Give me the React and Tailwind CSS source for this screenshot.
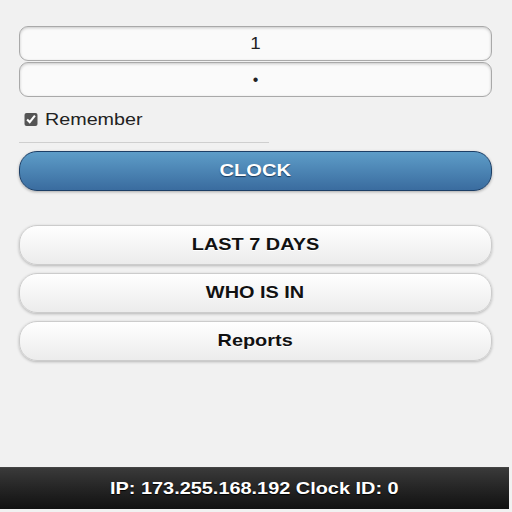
export default function App() {
  const font = { fontFamily: '"Liberation Sans", Arial, sans-serif' }
  return (
    <div style={font} className="w-[512px] h-[512px] bg-[#f1f1f1] flex flex-col">
      <div className="flex-1 px-[19px] pt-[26px] pr-[20px]">
        {/* login fields */}
        <div className="flex flex-col gap-px">
          <div className="h-[35px] rounded-[9px] border border-[#a9a9a9] bg-[#fafafa] shadow-[inset_0_1px_3px_rgba(0,0,0,0.2)] flex items-center justify-center text-[16px] text-[#222]">
            <span className="inline-block scale-x-[1.17]">1</span>
          </div>
          <div className="h-[35px] rounded-[9px] border border-[#a9a9a9] bg-[#fafafa] shadow-[inset_0_1px_3px_rgba(0,0,0,0.2)] flex items-center justify-center text-[16px] text-[#222]">
            •
          </div>
        </div>

        <label className="flex items-center gap-[7px] mt-[14px] ml-[5px] text-[17px] text-[#222] leading-none">
          <input type="checkbox" defaultChecked className="w-[14px] h-[13px] m-0 accent-[#555]" />
          <span className="inline-block origin-left scale-x-[1.16]">Remember</span>
        </label>

        <div className="mt-[14px] w-[250px] h-px bg-[#cfcfcf]" />

        <button className="mt-[8px] w-full h-[40px] rounded-[18px] border border-[#1d3f66] bg-gradient-to-b from-[#5e9dc8] to-[#3a6c9f] text-white text-[17px] font-bold [text-shadow:0_1px_1px_#1a3a5c] shadow-[0_1px_3px_rgba(0,0,0,0.3)]">
          <span className="inline-block scale-x-[1.18]">CLOCK</span>
        </button>

        <div className="mt-[34px] flex flex-col gap-[8px]">
          {['LAST 7 DAYS', 'WHO IS IN', 'Reports'].map((t) => (
            <button
              key={t}
              className="w-full h-[40px] rounded-[18px] border border-[#cccccc] bg-gradient-to-b from-white to-[#ececec] text-[#111] text-[17px] font-bold shadow-[0_1px_3px_rgba(0,0,0,0.25)] [text-shadow:0_1px_0_#fff]"
            >
              <span className="inline-block scale-x-[1.17]">{t}</span>
            </button>
          ))}
        </div>
      </div>

      <div className="h-[42px] mb-[3px] mr-[3px] border-t border-[#444] bg-gradient-to-b from-[#3a3a3a] to-[#111] flex items-center justify-center text-white text-[17px] font-bold [text-shadow:0_1px_1px_#000]">
        <span className="inline-block scale-x-[1.17]">IP: 173.255.168.192 Clock ID: 0</span>
      </div>
    </div>
  )
}
